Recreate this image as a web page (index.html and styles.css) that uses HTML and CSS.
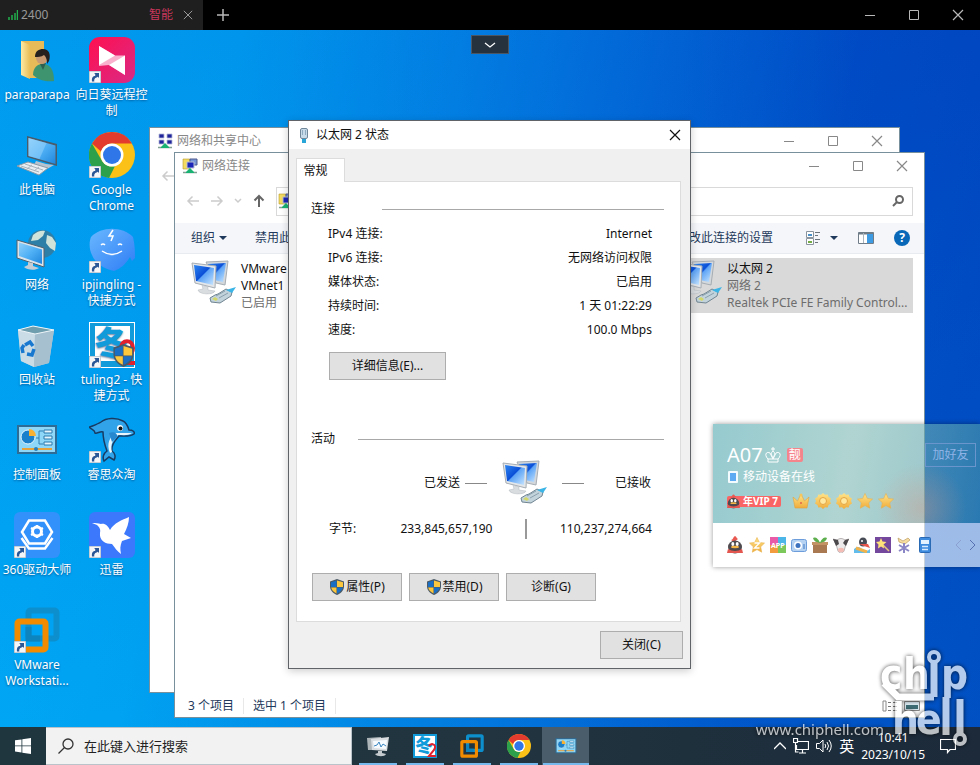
FILE: index.html
```html
<!DOCTYPE html>
<html lang="zh">
<head>
    <meta charset="UTF-8">
    <title>远程桌面</title>
    <link rel="stylesheet" href="styles.css">
</head>
<body>

<!-- 图标 -->
<svg class="sprite" aria-hidden="true">
    <defs>
        <linearGradient id="g-screen" x1="0" y1="0" x2="1" y2="1">
            <stop offset="0" stop-color="#2f86f0"/><stop offset=".45" stop-color="#0a4fd8"/><stop offset=".5" stop-color="#5ea4f6"/><stop offset="1" stop-color="#c9e6ff"/>
        </linearGradient>
        <linearGradient id="g-pc" x1="0" y1="0" x2="1" y2="1">
            <stop offset="0" stop-color="#8fd0fb"/><stop offset=".5" stop-color="#4fb0f5"/><stop offset="1" stop-color="#1f86dc"/>
        </linearGradient>
        <linearGradient id="g-folder" x1="0" y1="0" x2="1" y2="0">
            <stop offset="0" stop-color="#fdeaa5"/><stop offset="1" stop-color="#e9bd55"/>
        </linearGradient>
        <linearGradient id="g-sun" x1="0" y1="0" x2="1" y2="1">
            <stop offset="0" stop-color="#ff0f4f"/><stop offset="1" stop-color="#d92a86"/>
        </linearGradient>
        <linearGradient id="g-drop" x1="0" y1="0" x2="1" y2="1">
            <stop offset="0" stop-color="#69b8ff"/><stop offset="1" stop-color="#2f7cf5"/>
        </linearGradient>
        <linearGradient id="g-gold" x1="0" y1="0" x2="0" y2="1">
            <stop offset="0" stop-color="#ffe58a"/><stop offset="1" stop-color="#f0ac3c"/>
        </linearGradient>
    </defs>
    <symbol id="i-link" viewBox="0 0 12 12">
        <rect width="12" height="12" fill="#f4f6f8" stroke="#9aa7b3"/>
        <path d="M3 10.500c-.5-4 1-5.500 3.200-5.500V3L5 2h5v5L8.800 5.800 7.600 6.500C5.500 7 5 8.500 5.300 10.500z" fill="#2b5797"/>
    </symbol>
    <symbol id="i-user" viewBox="0 0 46 46">
        <path d="M7 4h23v37H13z" fill="#e7bb58"/><path d="M7 4l9 4v34l-9-4z" fill="url(#g-folder)"/>
        <path d="M19 38c0-8 5-11 10-11s11 3 11 17c-6 1-15 0-21-6z" fill="#3f9470"/>
        <path d="M26 27l3 6 3-7z" fill="#2c5f50"/>
        <circle cx="28" cy="21" r="6" fill="#c99b73"/>
        <path d="M21 20c0-6 4-8 8-8 6 0 8 5 6 12l-2 3c0-5-1-7-3-9-3 2-6 2-9 2z" fill="#26201e"/>
    </symbol>
    <symbol id="i-sunlogin" viewBox="0 0 46 46">
        <rect width="46" height="46" rx="11" fill="url(#g-sun)"/>
        <path d="M10 9l16 9.500h10V38L20 28l-10 1z" fill="#f9b0cc"/>
        <path d="M10 9l16 9.500L10 28z" fill="#fff"/><path d="M36 18.500V38L20 28z" fill="#fff"/>
    </symbol>
    <symbol id="i-pc" viewBox="0 0 46 46">
        <path d="M13 4l30 8v22l-30-9z" fill="#4a5b69"/><path d="M14.500 6l27 7.500v18.500l-27-8z" fill="url(#g-pc)"/><path d="M14.500 6l18 5-7 16-11-3z" fill="#9bd6fb" opacity=".5"/>
        <path d="M22 29l10 3 8 1-7 4-13-4z" fill="#b7c4cf"/>
        <path d="M3 34l11-4 20 6-9 7z" fill="#e8edf1" stroke="#8c9aa6"/><path d="M7 34l18 6M11 32l18 6M13 37l5-4M20 39l5-4" stroke="#a7b3bd" fill="none"/>
    </symbol>
    <symbol id="i-chrome" viewBox="0 0 46 46">
        <circle cx="23" cy="23" r="23" fill="#fbc116"/>
        <path d="M23 0A23 23 0 0 1 43 11.500H23a11.500 11.500 0 0 0-11 8L3 11.500A23 23 0 0 1 23 0z" fill="#e33b2e"/>
        <path d="M3 11.500L13 29a11.500 11.500 0 0 0 13 5l-6 12A23 23 0 0 1 3 11.500z" fill="#2da04c"/>
        <circle cx="23" cy="23" r="11.500" fill="#fff"/><circle cx="23" cy="23" r="9" fill="#2f77e8"/>
    </symbol>
    <symbol id="i-network" viewBox="0 0 46 46">
        <circle cx="28" cy="17" r="14" fill="#2e7fa8"/>
        <path d="M19 8c4-4 9-5 12-4l-2 5-5 4-7 1zM33 8l5 2 4 6-1 8-5-3-4-5z" fill="#cfe3da"/>
        <path d="M3 13l27 8v19L3 31z" fill="#dce4ea" stroke="#50606d"/><path d="M5 15.500l23 7v14.500L5 29z" fill="url(#g-pc)"/>
        <path d="M14 35l5 1v3l6 2c-4 3-12 2-15-1l4-2z" fill="#c3cdd5"/>
    </symbol>
    <symbol id="i-jingling" viewBox="0 0 46 46">
        <path d="M2 10C12-1 34-1 44 10c2 8 2 16 2 21l-3 3-2-4c-4 7-10 12-16 14C15 42 6 36 3 28 0 22 0 15 2 10z" fill="url(#g-drop)"/>
        <path d="M12 18q2-2 4 0M29 18q2-2 4 0M13 24q10 7 20 0" fill="none" stroke="#fff" stroke-width="1.500"/>
        <path d="M24 3l-4 6h4l-2 5" fill="none" stroke="#fff" stroke-width="1.500"/>
    </symbol>
    <symbol id="i-bin" viewBox="0 0 46 46">
        <path d="M4 8l15-4 21 4-5 33-15 4-13-6z" fill="#b3cfdd"/><path d="M4 8l17 4-1 33-13-6z" fill="#cadce6"/><path d="M21 12l19-4-5 33-15 4z" fill="#a7c0cf"/>
        <path d="M4 8l15-4 21 4-19 4z" fill="#6f9eae" stroke="#eff6f9"/>
        <path d="M11 23l5-3 3 4M20 27l-2 6-5-1M9 31l-1-5 2-3" fill="none" stroke="#1878d0" stroke-width="3.500"/>
    </symbol>
    <symbol id="i-shield" viewBox="0 0 16 16">
        <path d="M8 0l7 2.500v5C15 11.500 11 15 8 16 5 15 1 11.500 1 7.500v-5z" fill="#4b5a66"/>
        <path d="M7.500 1.400V8H2V3.300z" fill="#1a6fc4"/><path d="M8 1.400V8h6V3.300z" fill="#fcc63d"/><path d="M2.200 8.500H7.500v6C4.800 13.200 2.500 11 2.200 8.500z" fill="#fcc63d"/><path d="M13.800 8.500H8v6c2.800-1.200 5.500-3.500 5.800-6z" fill="#1a6fc4"/>
    </symbol>
    <symbol id="i-tuling" viewBox="0 0 46 46">
        <rect width="46" height="46" fill="#fff"/><path d="M1 1h44v44H1zM6 4v35h35V4z" fill="#129bdb" fill-rule="evenodd"/>
        <text x="5" y="34" font-size="34" font-weight="900" fill="#129bdb">冬</text>
        <path d="M32 26c0-9 12-9 12 0s-9 12-10 15h12" fill="none" stroke="#e1212d" stroke-width="4"/>
        <use href="#i-shield" x="23" y="22" width="23" height="23"/>
    </symbol>
    <symbol id="i-panel" viewBox="0 0 46 46">
        <rect x="3" y="8" width="40" height="29" fill="#2e6c96"/><rect x="5" y="10" width="36" height="25" fill="#8fd7f8"/>
        <circle cx="14" cy="20" r="7" fill="#1b80cb" stroke="#e5f5fd"/><path d="M15 19v-7a7 7 0 0 1 7 7z" fill="#f8b133"/>
        <path d="M22 21h3v-7h4M25 21v6h4" fill="none" stroke="#2f7fb4"/>
        <path d="M30 13h8v3h-8zM30 19h8v3h-8zM30 25h8v3h-8z" fill="#e5f5fd" stroke="#2779ad"/><path d="M8 32h30" stroke="#e7a23a" stroke-width="2"/><circle cx="22" cy="32" r="2" fill="#2a7fb8"/>
    </symbol>
    <symbol id="i-dolphin" viewBox="0 0 46 46">
        <path d="M1 10C6 8 9 7 12 5c5-4 15-5 22-1 4 2 5 6 6 9 4 0 6 2 5 4-4 3-10 2-15 2-4 5-8 9-7 15 3 2 4 6 2 9l-5-3-5 4c-2-4 0-8 3-10-3-8-4-12-4-19-3-1-6 2-8 1 0-3-3-3-6-6z" fill="#31a3e8" stroke="#173b62" stroke-width="1.500"/>
        <path d="M21 36c-4-9 0-17 6-20l16 0c-4 3-9 2-14 2-5 5-8 9-6 17z" fill="#eaf6fd"/>
        <circle cx="31" cy="11" r="3" fill="#fff"/><circle cx="31.500" cy="11.500" r="2" fill="#111"/>
        <path d="M20 16c4-2 9 0 8 4l-5 5z" fill="#2788cf"/>
    </symbol>
    <symbol id="i-driver" viewBox="0 0 46 46">
        <rect width="46" height="46" rx="6" fill="#3391fb"/>
        <path d="M15 8.500h16L38 20 31 31.500H15L8 20z" fill="none" stroke="#fff" stroke-width="2.500"/>
        <path d="M7.500 26L15 36.500h16L38.500 26" fill="none" stroke="#fff" stroke-width="2.500"/>
        <circle cx="23" cy="19.500" r="4.500" fill="none" stroke="#fff" stroke-width="3"/><path d="M23 13v2M23 24v2M17 16l2 1M27 22l2 1M17 23l2-1M27 17l2-1" stroke="#fff" stroke-width="2.500"/>
    </symbol>
    <symbol id="i-xunlei" viewBox="0 0 46 46">
        <rect width="46" height="46" rx="6" fill="#3c78fb"/>
        <path d="M3 11c4 0 6 0 9 1 4-1 7 2 9 6C25 11 33 8 40 5c0 6-2 11-5 17l7 4-9 3c-2 5-2 8-1 13-4-3-6-6-9-10-6 0-13-3-12-11 1-4-1-6-3-8z" fill="#fff"/>
    </symbol>
    <symbol id="i-vmware" viewBox="0 0 46 46">
        <rect x="14.500" y="3.500" width="28" height="28" rx="2" fill="none" stroke="#0d8fce" stroke-width="6"/>
        <rect x="3.500" y="14.500" width="28" height="28" rx="2" fill="none" stroke="#f38b00" stroke-width="6"/>
        <path d="M14.500 20v11.500H26" fill="none" stroke="#0d84bd" stroke-width="6"/>
    </symbol>
    <symbol id="i-adapter" viewBox="0 0 46 46">
        <path d="M15 2l22-1-3 24-9-2z" fill="#d3d8dc" stroke="#a6adb3"/><path d="M17 4l18-1-3 19-14-3z" fill="url(#g-screen)"/>
        <path d="M1 3l24 3-1 22-20-5z" fill="#e4e7ea" stroke="#a6adb3"/><path d="M3 5l20 3-1 17-17-4z" fill="url(#g-screen)"/>
        <path d="M11 25l6 2v3l7 1c-1 4-16 4-17-1l5-1z" fill="#d9dde0" stroke="#b3b9be" stroke-width=".5"/>
        <path d="M19 38l5-3 3-1 8-5 6 3-1 4-11 7-9-1z" fill="#c3d3dc" stroke="#708591"/><path d="M25 36l9-5M28 38l9-5" stroke="#8aa0ad"/><path d="M35 30l10-3-4 6z" fill="#3bb4e6"/><path d="M21 39l3-2 3 2-2 2z" fill="#d3d86a"/>
    </symbol>
    <symbol id="i-share" viewBox="0 0 16 16">
        <path d="M2 1h5v4H2zM10 1h5v4h-5zM2 7h5v4H2zM10 7h5v4h-5z" fill="#20249b" stroke="#b4b9d8" stroke-width=".8"/>
        <path d="M1 14.500h14" stroke="#83a095" stroke-width="1.500"/><path d="M8 10l4 4v1H4v-1z" fill="#18b273"/>
    </symbol>
    <symbol id="i-conn" viewBox="0 0 16 16">
        <path d="M1 1h7v10H1z" fill="#f3db62" stroke="#b79a2a" stroke-width=".6"/>
        <path d="M8 1h7v6H8z" fill="#7796d9" stroke="#4f5a8c"/><path d="M5 4h7v6H5z" fill="#1b25b7" stroke="#b9bfd5"/>
        <path d="M1 14.500h14" stroke="#83a095" stroke-width="1.500"/><path d="M8 10l4 4v1H4v-1z" fill="#18b273"/>
    </symbol>
    <symbol id="i-plug" viewBox="0 0 16 16">
        <rect x="4.500" y="1.500" width="7" height="10" rx="1.500" fill="#c8dbe8" stroke="#70879a"/><path d="M6.500 3v5M9.500 3v5" stroke="#8fabc0"/><path d="M6 12h4v4H6z" fill="#29a6d8"/>
    </symbol>
    <symbol id="i-min" viewBox="0 0 12 12"><path d="M1 6.500h10" stroke="currentColor" fill="none"/></symbol>
    <symbol id="i-max" viewBox="0 0 12 12"><path d="M1.500 1.500h9v9h-9z" stroke="currentColor" fill="none"/></symbol>
    <symbol id="i-close" viewBox="0 0 12 12"><path d="M1 1l10 10M11 1L1 11" stroke="currentColor" fill="none" stroke-width="1.200"/></symbol>
    <symbol id="i-arrow" viewBox="0 0 14 14"><path d="M13 7H2M6.500 2.500L2 7l4.500 4.500" stroke="currentColor" fill="none" stroke-width="1.500"/></symbol>
    <symbol id="i-search" viewBox="0 0 16 16"><circle cx="10" cy="6" r="5" fill="none" stroke="currentColor" stroke-width="1.300"/><path d="M6.500 9.500L.5 15.500" stroke="currentColor" stroke-width="1.300"/></symbol>
    <symbol id="i-star" viewBox="0 0 16 16"><path d="M8 .5l2.300 4.900 5.200.7-3.800 3.700 1 5.400L8 12.600l-4.700 2.600 1-5.400L.5 6.100l5.200-.7z" fill="url(#g-gold)" stroke="#eab14e" stroke-width=".6"/></symbol>
    <symbol id="i-sun" viewBox="0 0 16 16"><path d="M8 0l2 1.800L12.700 1.500l.8 2.600L16 5.500 15 8l1 2.500-2.500 1.400-.8 2.600-2.700-.3L8 16l-2-1.800-2.700.3-.8-2.600L0 10.500 1 8 0 5.500l2.500-1.400.8-2.600 2.700.3z" fill="url(#g-gold)"/><circle cx="8" cy="8" r="3.500" fill="#ffe9a0" stroke="#e5a544"/></symbol>
    <symbol id="i-crown" viewBox="0 0 18 16"><path d="M1 4l4.500 4L9 1l3.500 7L17 4l-2 11H3z" fill="url(#g-gold)" stroke="#e0a23c" stroke-width=".6"/><circle cx="9" cy="2" r="1.500" fill="#f6c65a"/><circle cx="9" cy="10" r="1" fill="#e3654a"/></symbol>
    <symbol id="i-penguin" viewBox="0 0 16 18">
        <path d="M8 0c2 1 1 2 3 3l-4 3-3-2c2 0 2-3 4-4z" fill="#e95851"/>
        <ellipse cx="8" cy="11" rx="7" ry="6.500" fill="#4e4a4e"/><ellipse cx="5.800" cy="8" rx="1.500" ry="2" fill="#fff"/><ellipse cx="10.200" cy="8" rx="1.500" ry="2" fill="#fff"/><ellipse cx="8" cy="11" rx="4" ry="1.200" fill="#f2b546"/><path d="M1 13q7 4 14 0l1 4H0z" fill="#e2564f"/>
    </symbol>
</svg>

<header class="session-bar">
    <div class="session-tab">
        <svg class="signal" viewBox="0 0 10 10"><path d="M1 10V7M4 10V5M7 10V3M9.500 10V0" stroke="#22b14c" stroke-width="1.500"/></svg>
        <span class="session-name">2400</span>
        <span class="session-mode">智能</span>
        <button class="plain" aria-label="关闭标签"><svg class="s10"><use href="#i-close"/></svg></button>
    </div>
    <button class="plain add-tab" aria-label="新建标签"><svg class="s12" viewBox="0 0 12 12"><path d="M6 0v12M0 6h12" stroke="currentColor" stroke-width="1.500"/></svg></button>
    <div class="session-controls">
        <button class="plain" aria-label="最小化"><svg class="s12"><use href="#i-min"/></svg></button>
        <button class="plain" aria-label="最大化"><svg class="s12"><use href="#i-max"/></svg></button>
        <button class="plain" aria-label="关闭"><svg class="s12"><use href="#i-close"/></svg></button>
    </div>
</header>

<main class="desktop">
    <div class="shortcuts">
        <a href="#" class="shortcut"><svg><use href="#i-user"/></svg><span>paraparapa</span></a>
        <a href="#" class="shortcut"><svg><use href="#i-sunlogin"/><use href="#i-link" y="34" width="12" height="12"/></svg><span>向日葵远程控制</span></a>
        <a href="#" class="shortcut"><svg><use href="#i-pc"/></svg><span>此电脑</span></a>
        <a href="#" class="shortcut"><svg><use href="#i-chrome"/><use href="#i-link" y="34" width="12" height="12"/></svg><span>Google Chrome</span></a>
        <a href="#" class="shortcut"><svg><use href="#i-network"/></svg><span>网络</span></a>
        <a href="#" class="shortcut"><svg><use href="#i-jingling"/><use href="#i-link" y="34" width="12" height="12"/></svg><span>ipjingling - 快捷方式</span></a>
        <a href="#" class="shortcut"><svg><use href="#i-bin"/></svg><span>回收站</span></a>
        <a href="#" class="shortcut"><svg><use href="#i-tuling"/><use href="#i-link" y="34" width="12" height="12"/></svg><span>tuling2 - 快捷方式</span></a>
        <a href="#" class="shortcut"><svg><use href="#i-panel"/></svg><span>控制面板</span></a>
        <a href="#" class="shortcut"><svg><use href="#i-dolphin"/><use href="#i-link" y="34" width="12" height="12"/></svg><span>睿思众淘</span></a>
        <a href="#" class="shortcut"><svg><use href="#i-driver"/><use href="#i-link" y="34" width="12" height="12"/></svg><span>360驱动大师</span></a>
        <a href="#" class="shortcut"><svg><use href="#i-xunlei"/><use href="#i-link" y="34" width="12" height="12"/></svg><span>迅雷</span></a>
        <a href="#" class="shortcut"><svg><use href="#i-vmware"/><use href="#i-link" y="34" width="12" height="12"/></svg><span>VMware Workstati...</span></a>
    </div>

    <button class="plain pulldown" aria-label="展开工具栏"><svg class="s12" viewBox="0 0 12 12"><path d="M1 4l5 4 5-4" fill="none" stroke="currentColor" stroke-width="1.300"/></svg></button>

    <!-- 网络和共享中心 -->
    <section class="window sharing">
        <div class="titlebar">
            <svg class="s16"><use href="#i-share"/></svg>
            <span class="title">网络和共享中心</span>
            <button class="plain" aria-label="最小化"><svg class="s12"><use href="#i-min"/></svg></button>
            <button class="plain" aria-label="最大化"><svg class="s12"><use href="#i-max"/></svg></button>
            <button class="plain" aria-label="关闭"><svg class="s12"><use href="#i-close"/></svg></button>
        </div>
        <div class="navbar"><svg class="s14 faint"><use href="#i-arrow"/></svg></div>
    </section>

    <!-- 网络连接 -->
    <section class="window connections">
        <div class="titlebar">
            <svg class="s16"><use href="#i-conn"/></svg>
            <span class="title">网络连接</span>
            <button class="plain" aria-label="最小化"><svg class="s12"><use href="#i-min"/></svg></button>
            <button class="plain" aria-label="最大化"><svg class="s12"><use href="#i-max"/></svg></button>
            <button class="plain" aria-label="关闭"><svg class="s12"><use href="#i-close"/></svg></button>
        </div>
        <div class="navbar">
            <svg class="s14 faint"><use href="#i-arrow"/></svg>
            <svg class="s14 faint flip"><use href="#i-arrow"/></svg>
            <svg class="s8 faint" viewBox="0 0 8 8"><path d="M1 2l3 3 3-3" fill="none" stroke="currentColor" stroke-width="1.500"/></svg>
            <svg class="s14 up" viewBox="0 0 14 14"><path d="M7 13V2M2.500 6.500L7 2l4.500 4.500" fill="none" stroke="currentColor" stroke-width="2"/></svg>
            <div class="address">
                <svg class="s16"><use href="#i-conn"/></svg>
                <svg class="s12" viewBox="0 0 12 12"><circle cx="7.500" cy="4.500" r="3.500" fill="none" stroke="currentColor" stroke-width="2"/><path d="M5 7L1 11" stroke="currentColor" stroke-width="2"/></svg>
            </div>
        </div>
        <div class="commands">
            <button class="plain organize">组织 <span class="caret"></span></button>
            <button class="plain">禁用此网络设备</button>
            <button class="plain push">更改此连接的设置</button>
            <button class="plain view" aria-label="视图"><svg class="s16" viewBox="0 0 16 16"><path d="M1.500 1.500h7v6h-7zM1.500 8.500h7v6h-7z" fill="#fff" stroke="#8b949d"/><path d="M3 4h4v2H3z" fill="#4b90c9"/><path d="M3 11h4v2H3z" fill="#75ab45"/><path d="M10 2.500h5M10 5.500h3M10 9.500h5M10 12.500h3" stroke="#6c747c"/></svg><span class="caret"></span></button>
            <button class="plain" aria-label="预览窗格"><svg class="s16" viewBox="0 0 16 16"><path d="M.5 2.500h15v11H.5z" fill="#fff" stroke="#6f7c88"/><path d="M.5 3.500h15" stroke="#6f7c88" stroke-width="2"/><path d="M5.500 3v10" stroke="#a9b4be"/><path d="M9 4h6v9H9z" fill="#3d9be4"/></svg></button>
            <button class="plain help" aria-label="帮助">?</button>
        </div>
        <div class="adapters">
            <div class="adapter">
                <svg><use href="#i-adapter"/></svg>
                <p>VMware<br>VMnet1<br><span>已启用</span></p>
            </div>
            <div class="adapter"></div>
            <div class="adapter selected">
                <svg><use href="#i-adapter"/></svg>
                <p>以太网 2<br><span>网络 2</span><br><span>Realtek PCIe FE Family Control...</span></p>
            </div>
        </div>
        <footer class="statusbar">
            <span>3 个项目</span><span>选中 1 个项目</span>
            <svg class="views" viewBox="0 0 42 12"><path d="M1 1h3v10H1z" fill="#fff" stroke="#888"/><path d="M6 2.500h3M11 2.500h4M6 6.500h3M11 6.500h4M6 10.500h3M11 10.500h4" stroke="#777"/><path d="M22.500 1.500h15v9h-15z" fill="#d8e6ee" stroke="#888"/><path d="M24 5h12v4H24z" fill="#3e6c74"/></svg>
        </footer>
    </section>

    <!-- 以太网 2 状态 -->
    <section class="dialog">
        <div class="titlebar">
            <svg class="s16"><use href="#i-plug"/></svg>
            <span class="title">以太网 2 状态</span>
            <button class="plain" aria-label="关闭"><svg class="s12"><use href="#i-close"/></svg></button>
        </div>
        <div class="dialog-body">
            <button class="plain tab">常规</button>
            <div class="panel">
                <h2 class="group wide">连接</h2>
                <dl class="facts">
                    <div><dt>IPv4 连接:</dt><dd>Internet</dd></div>
                    <div><dt>IPv6 连接:</dt><dd>无网络访问权限</dd></div>
                    <div><dt>媒体状态:</dt><dd>已启用</dd></div>
                    <div><dt>持续时间:</dt><dd>1 天 01:22:29</dd></div>
                    <div><dt>速度:</dt><dd>100.0 Mbps</dd></div>
                </dl>
                <button class="btn details">详细信息(E)...</button>
                <h2 class="group activity">活动</h2>
                <div class="traffic">
                    <span class="sent">已发送</span>
                    <svg><use href="#i-adapter"/></svg>
                    <span class="received">已接收</span>
                </div>
                <div class="bytes">
                    <span>字节:</span><span class="num">233,845,657,190</span><i></i><span class="num">110,237,274,664</span>
                </div>
                <div class="actions">
                    <button class="btn"><svg class="s16"><use href="#i-shield"/></svg>属性(P)</button>
                    <button class="btn"><svg class="s16"><use href="#i-shield"/></svg>禁用(D)</button>
                    <button class="btn">诊断(G)</button>
                </div>
            </div>
            <button class="btn close-btn">关闭(C)</button>
        </div>
    </section>

    <!-- QQ 资料卡 -->
    <aside class="card">
        <div class="card-head">
            <div class="card-info">
                <div class="nick">A07<svg class="s16" viewBox="0 0 16 16"><path d="M8 0v4M6 2h4M3 12C-1 8 1 4 5 6l3 6 3-6c4-2 6 2 2 6zM3 12v3h10v-3M8 4c-3 2-1 5 0 7 1-2 3-5 0-7" fill="none" stroke="#fff"/></svg><b>靓</b></div>
                <div class="online"><svg class="s12" viewBox="0 0 12 12"><rect x="1" width="10" height="12" rx="1" fill="#f4fbff"/><path d="M3 2h6v8H3z" fill="#5daaf2"/></svg>移动设备在线</div>
                <div class="levels">
                    <span class="vip"><svg viewBox="0 0 16 18"><use href="#i-penguin"/></svg>年VIP 7</span>
                    <svg class="s18"><use href="#i-crown"/></svg>
                    <svg class="s16"><use href="#i-sun"/></svg>
                    <svg class="s16"><use href="#i-sun"/></svg>
                    <svg class="s16"><use href="#i-star"/></svg>
                    <svg class="s16"><use href="#i-star"/></svg>
                </div>
            </div>
            <button class="plain add-friend">加好友</button>
        </div>
        <div class="card-icons">
            <svg class="s18"><use href="#i-penguin"/></svg>
            <svg class="s16" viewBox="0 0 16 16"><use href="#i-star"/><path d="M5.500 6h5l-5 5h5" fill="none" stroke="#fff" stroke-width="1.300"/></svg>
            <svg class="s16" viewBox="0 0 16 16"><path d="M0 0h8v8H0z" fill="#e95aa7"/><path d="M8 0h8v8H8z" fill="#4cb6e8"/><path d="M0 8h8v8H0z" fill="#f29a3e"/><path d="M8 8h8v8H8z" fill="#7cc85a"/><text x="1" y="11" font-size="7" font-weight="700" fill="#fff">APP</text></svg>
            <svg class="s16" viewBox="0 0 16 16"><rect x=".5" y="2.500" width="15" height="12" rx="2" fill="#b5d2f3" stroke="#6d9edb"/><circle cx="7" cy="8.500" r="4" fill="#fff"/><circle cx="7" cy="8.500" r="2.500" fill="#3d72bf"/><path d="M12 7h2v5h-2z" fill="#7aa5db"/></svg>
            <svg class="s16" viewBox="0 0 16 16"><path d="M1 6h14v10H1z" fill="#a97a52"/><path d="M0 5h16v3H0z" fill="#c39265"/><path d="M8 6C6 0 2 0 1 1c1 4 4 4 7 5 3-1 6-1 7-5-1-1-5-1-7 5z" fill="#5daf4d"/></svg>
            <svg class="s16" viewBox="0 0 16 16"><path d="M0 2l4 1c3-2 5-2 8 0l4-1-3 5-2 7c-2 3-4 3-6 0L3 7z" fill="#eceaea" stroke="#8d8586" stroke-width=".6"/><path d="M0 2l5 1 1 4-3 2zM16 2l-4 1-2 3 3 3z" fill="#4c494c"/><ellipse cx="8" cy="13" rx="3" ry="2.200" fill="#f3bcb4"/></svg>
            <svg class="s16" viewBox="0 0 16 16"><ellipse cx="9" cy="5" rx="4" ry="4.500" fill="#474b55"/><path d="M5 7h9l2 4-6-2z" fill="#e8574b"/><path d="M0 12q4-4 8 0t8 0v4H0z" fill="#62bdec"/><path d="M2 11l11 4" stroke="#f0b24a" stroke-width="3"/><circle cx="8" cy="4" r="1" fill="#fff"/></svg>
            <svg class="s16" viewBox="0 0 16 16"><rect width="16" height="16" fill="#74489c"/><path d="M8 8l6 6" stroke="#e4c67d" stroke-width="1.500"/><path d="M6 1l1.500 3.500 4 .5-3 2.500.5 4L6 9.500l-3 2 .5-4L1 5l3.500-.5z" fill="#ffe27a"/></svg>
            <svg class="s16" viewBox="0 0 16 16"><path d="M2 1l5 3 5-3 2 2-5 4-6-2z" fill="#f7dda0" stroke="#bd9c61" stroke-width=".7"/><path d="M8 6v10M3 8l10 6M13 8L3 14" stroke="#8b87c6" stroke-width="2"/></svg>
            <svg class="s16" viewBox="0 0 16 16"><rect x="2.500" y=".5" width="11" height="15" rx="1" fill="#3c8bdf" stroke="#2a69b4"/><path d="M4 3h8v4H4z" fill="#e3f2ff"/><path d="M5 9.500h6M5 12.500h6" stroke="#d5eaff" stroke-width="1.500"/></svg>
            <svg class="pager" viewBox="0 0 22 12"><path d="M7 1L2 6l5 5" fill="none" stroke="#8ba0d0"/><path d="M16 1l5 5-5 5" fill="none" stroke="#5670b0"/></svg>
        </div>
    </aside>
</main>

<footer class="taskbar">
    <button class="plain start" aria-label="开始"><svg class="s16" viewBox="0 0 16 16"><path d="M0 2.300l6.500-.9v6.100H0zM7.300 1.300L16 0v7.500H7.300zM0 8.300h6.500v6.200L0 13.600zM7.300 8.300H16V16l-8.700-1.300z" fill="#fff"/></svg></button>
    <label class="search"><svg class="s16"><use href="#i-search"/></svg><input type="text" placeholder="在此键入进行搜索" aria-label="搜索"></label>
    <nav class="tasks">
        <button class="plain task" aria-label="任务管理器"><svg class="s24" viewBox="0 0 24 24"><path d="M1 4l14-1v13H2z" fill="#aeb5b9"/><path d="M5 5l18-2-2 14-15-1z" fill="#dadee0"/><path d="M7 7l14-1-1 9-12-1z" fill="#f8fbfd"/><path d="M8 12l3-1 2-3 2 5 2-3 3 2" fill="none" stroke="#3a86c0"/><path d="M12 17h4v2l4 1c-1 3-9 3-11 0l3-1z" fill="#c6cbcf"/></svg></button>
        <button class="plain task" aria-label="tuling2"><svg class="s24" viewBox="0 0 24 24"><path d="M0 0h24v24H0z" fill="#129bdb"/><path d="M2 2h20v20H2z" fill="#fff"/><text x="2" y="18" font-size="18" font-weight="900" fill="#129bdb">冬</text><path d="M16 12q1-2 3-2 5 1 2 6l-5 6h7" fill="none" stroke="#e1212d" stroke-width="2"/></svg></button>
        <button class="plain task" aria-label="VMware"><svg class="s24"><use href="#i-vmware"/></svg></button>
        <button class="plain task" aria-label="Chrome"><svg class="s24"><use href="#i-chrome"/></svg></button>
        <button class="plain task active" aria-label="控制面板"><svg class="s24"><use href="#i-panel"/></svg></button>
    </nav>
    <div class="tray">
        <svg class="s12" viewBox="0 0 12 12"><path d="M0 9l6-6 6 6" fill="none" stroke="#fff" stroke-width="1.300"/></svg>
        <svg class="s16" viewBox="0 0 16 16"><path d="M5 3.500h10.500v8H3.500V7M9.500 12v3M6 15h7M.5.500h4v4h-4zM2.500 5v9h3" fill="none" stroke="#fff" stroke-width="1.200"/></svg>
        <svg class="s16" viewBox="0 0 16 16"><path d="M.5 5.500h3L7 2v12l-3.500-3.500h-3zM9 6q1.500 2 0 4M11 4q3 4 0 8M13 2q4.500 6 0 12" fill="none" stroke="#fff"/></svg>
        <span class="ime">英</span>
        <time>10:41<br>2023/10/15</time>
        <svg class="s16 notify" viewBox="0 0 16 16"><path d="M.5 1.500h15v10H10l-2.500 3v-3h-7z" fill="none" stroke="#fff" stroke-width="1.200"/></svg>
    </div>
</footer>

<div class="watermark">
    <span>www.chiphell.com</span>
    <svg viewBox="0 0 88 104">
        <g class="mark-text">
            <text x="0" y="42">c</text><text x="23" y="42">h</text><text x="61" y="42">p</text>
            <text x="12" y="87">h</text><text x="36" y="87">e</text>
        </g>
        <g fill="none" stroke="#fff" stroke-width="7">
            <circle cx="54" cy="10" r="5" stroke-width="4"/><path d="M54 15v35M4 36l14 14h36M66 50v38M80 52v35"/><circle cx="80" cy="92" r="5" stroke-width="4"/>
        </g>
    </svg>
</div>

</body>
</html>
```
FILE: styles.css
```css
* {
    box-sizing: border-box;
}
body {
    margin: 0;
    height: 100vh;
    display: flex;
    flex-direction: column;
    position: relative;
    overflow: hidden;
    font-family: "Noto Sans", "Noto Sans CJK SC", sans-serif;
    font-size: 12px;
    line-height: 16px;
    color: #111;
}
h2, p, dl, dd {
    margin: 0;
    font-size: 12px;
    font-weight: 400;
}
svg {
    flex: none;
    display: block;
}
.sprite {
    position: absolute;
    width: 0;
    height: 0;
}
.s8 { width: 8px; height: 8px; }
.s10 { width: 10px; height: 10px; }
.s12 { width: 12px; height: 12px; }
.s14 { width: 14px; height: 14px; }
.s16 { width: 16px; height: 16px; }
.s18 { width: 18px; height: 18px; }
.s24 { width: 24px; height: 24px; }
.plain {
    display: flex;
    align-items: center;
    justify-content: center;
    padding: 0;
    border: 0;
    background: none;
    color: inherit;
    font: inherit;
    white-space: nowrap;
}

/* 顶部会话栏 */
.session-bar {
    flex: none;
    display: flex;
    height: 30px;
    background: #000;
    color: #b8b8b8;
}
.session-tab {
    display: flex;
    align-items: center;
    width: 203px;
    padding: 0 10px 0 8px;
    background: #1f1f1f;
    color: #999;
}
.signal {
    width: 10px;
    height: 10px;
    margin-right: 3px;
}
.session-mode {
    margin: 0 10px 0 auto;
    color: #c9375d;
}
.add-tab {
    width: 40px;
}
.session-controls {
    display: flex;
    margin-left: auto;
}
.session-controls button {
    width: 44px;
}

/* 桌面 */
.desktop {
    flex: 1;
    position: relative;
    overflow: hidden;
    background: linear-gradient(to bottom, rgba(0, 60, 200, 0.1), rgba(0, 190, 255, 0.1)), linear-gradient(100deg, #00a6f4, #009ff0 22%, #0284e4 42%, #0268d6 60%, #004cc4 78%, #0044bc);
}
.shortcuts {
    display: grid;
    grid-template-columns: 74px 75px;
    grid-auto-rows: 95px;
    padding-top: 7px;
}
.shortcut {
    display: flex;
    flex-direction: column;
    align-items: center;
    gap: 4px;
    color: #fff;
    text-align: center;
    text-decoration: none;
    text-shadow: 0 1px 2px rgba(0, 40, 90, 0.6);
}
.shortcut svg {
    width: 46px;
    height: 46px;
}
.shortcut span {
    max-width: 72px;
}
.pulldown {
    position: absolute;
    top: 5px;
    left: calc(50% - 19px);
    width: 38px;
    height: 19px;
    background: #26323e;
    border: 1px solid #4a5664;
    color: #fff;
}

/* 窗口 */
.window {
    position: absolute;
    display: flex;
    flex-direction: column;
    width: 751px;
    height: 566px;
    background: #fff;
    border: 1px solid #78909c;
    color: #888;
}
.sharing {
    left: 149px;
    top: 97px;
}
.connections {
    left: 174px;
    top: 122px;
}
.titlebar {
    display: flex;
    align-items: center;
    height: 26px;
    padding-left: 7px;
}
.title {
    margin: 0 auto 0 4px;
}
.titlebar button {
    width: 44px;
    height: 26px;
}
.navbar {
    display: flex;
    align-items: center;
    gap: 10px;
    height: 44px;
    padding: 0 11px;
    color: #666;
}
.faint {
    color: #ccc;
}
.flip {
    transform: scaleX(-1);
}
.address {
    flex: 1;
    display: flex;
    align-items: center;
    justify-content: space-between;
    height: 29px;
    padding: 0 8px 0 1px;
    border: 1px solid #d9d9d9;
}
.commands {
    display: flex;
    align-items: center;
    gap: 20px;
    height: 31px;
    padding: 0 14px 0 16px;
    background: #f4f6f9;
    border-bottom: 1px solid #e8ebef;
    color: #1e395b;
}
.commands button {
    gap: 4px;
}
.commands .organize {
    margin-right: 8px;
}
.commands .view {
    gap: 9px;
}
.commands .push {
    margin: 0 12px 0 auto;
}
.caret {
    border: 4px solid transparent;
    border-top-color: #1e395b;
    border-bottom: 0;
}
.commands .help {
    width: 16px;
    height: 16px;
    border-radius: 50%;
    background: #0a68b8;
    color: #fff;
    font-weight: 700;
}
.adapters {
    display: grid;
    grid-template-columns: repeat(3, 1fr);
    gap: 3px;
    padding: 4px 11px 0 12px;
}
.adapter {
    display: flex;
    gap: 4px;
    height: 55px;
    padding: 2px 4px;
    color: #111;
    white-space: nowrap;
}
.adapter svg {
    width: 46px;
    height: 46px;
}
.adapter p {
    line-height: 17px;
}
.adapter p span {
    color: #6d6d6d;
}
.adapter.selected {
    background: #d9d9d9;
}
.statusbar {
    display: flex;
    align-items: center;
    height: 22px;
    margin-top: auto;
    padding-left: 13px;
    color: #1e395b;
}
.statusbar span {
    padding-right: 9px;
    margin-right: 9px;
    border-right: 1px solid #e8e8e8;
}
.views {
    width: 42px;
    height: 12px;
    margin-left: auto;
}

/* 状态对话框 */
.dialog {
    position: absolute;
    left: 288px;
    top: 90px;
    width: 403px;
    border: 1px solid #606468;
    background: #f0f0f0;
    box-shadow: 0 2px 8px rgba(0, 0, 0, 0.2);
}
.dialog .titlebar {
    height: 28px;
    background: #fff;
}
.dialog .titlebar button {
    width: 30px;
}
.dialog-body {
    display: flex;
    flex-direction: column;
    padding: 9px 7px;
}
.tab {
    align-self: flex-start;
    width: 49px;
    height: 24px;
    padding-right: 10px;
    margin-bottom: -1px;
    background: #fff;
    border: 1px solid #dcdcdc;
    border-bottom: 0;
    z-index: 1;
}
.panel {
    padding: 16px 16px 20px 14px;
    margin-right: 2px;
    background: #fff;
    border: 1px solid #dcdcdc;
}
.group {
    display: flex;
    align-items: center;
    line-height: 22px;
}
.group::after {
    content: "";
    flex: 1;
    height: 1px;
    margin-left: 23px;
    background: #a8a8a8;
}
.group.wide::after {
    margin-left: 47px;
}
.facts {
    padding: 2px 12px 0 17px;
}
.facts div {
    display: flex;
    justify-content: space-between;
    line-height: 24px;
}
.btn {
    display: flex;
    align-items: center;
    justify-content: center;
    gap: 1px;
    width: 90px;
    height: 28px;
    padding: 0;
    border: 1px solid #adadad;
    background: #e1e1e1;
    color: #111;
    font: inherit;
}
.details {
    width: 117px;
    margin: 10px 0 48px 18px;
}
.traffic {
    display: flex;
    align-items: center;
    justify-content: space-between;
    padding: 0 13px 0 113px;
    margin: 10px 0 12px;
}
.traffic svg {
    width: 46px;
    height: 46px;
}
.traffic span {
    display: flex;
    align-items: center;
}
.sent::after, .received::before {
    content: "";
    width: 22px;
    height: 1px;
    background: #888;
}
.sent::after {
    margin-left: 5px;
}
.received::before {
    margin-right: 31px;
}
.bytes {
    display: grid;
    grid-template-columns: 70px 1fr 66px 1fr;
    align-items: center;
    height: 22px;
    padding: 0 12px 0 18px;
}
.bytes .num {
    text-align: right;
}
.bytes i {
    justify-self: center;
    width: 2px;
    height: 20px;
    background: #999;
}
.actions {
    display: flex;
    gap: 7px;
    margin: 33px 0 0 1px;
}
.close-btn {
    align-self: flex-end;
    width: 83px;
    margin-top: 9px;
}

/* QQ 资料卡 */
.card {
    position: absolute;
    right: 0;
    top: 394px;
    width: 267px;
    color: #fff;
    box-shadow: 0 0 5px rgba(0, 0, 0, 0.4);
}
.card-head {
    display: flex;
    justify-content: space-between;
    height: 99px;
    padding: 19px 4px 0 14px;
    background: radial-gradient(circle at 78% 85%, rgba(220, 150, 130, 0.35), transparent 20%), linear-gradient(100deg, rgba(95, 175, 182, 0.66), rgba(135, 190, 185, 0.66) 50%, rgba(70, 150, 165, 0.6));
}
.nick {
    display: flex;
    align-items: center;
    gap: 2px;
    height: 24px;
    font-size: 20px;
}
.nick b {
    margin-left: 4px;
    padding: 0 2px;
    border-radius: 2px;
    background: #f5858d;
    font-size: 12px;
    font-weight: 400;
    line-height: 14px;
}
.online {
    display: flex;
    align-items: center;
    gap: 4px;
    height: 20px;
}
.levels {
    display: flex;
    align-items: center;
    gap: 5px;
    height: 28px;
}
.vip {
    display: flex;
    align-items: center;
    gap: 3px;
    height: 11px;
    margin-right: 6px;
    padding-right: 3px;
    border-radius: 2px;
    background: #f96464;
    font-size: 10px;
    font-weight: 700;
}
.vip svg {
    width: 13px;
    height: 15px;
}
.add-friend {
    width: 51px;
    height: 24px;
    border: 1px solid #6a95cc;
    color: #8fb3e6;
}
.card-icons {
    display: flex;
    align-items: center;
    gap: 5px;
    height: 44px;
    padding: 0 4px 0 13px;
    background: rgba(255, 255, 255, 0.62);
}
.pager {
    width: 22px;
    height: 12px;
    margin-left: auto;
}

/* 任务栏 */
.taskbar {
    flex: none;
    display: flex;
    height: 38px;
    background: linear-gradient(to right, #20363f, #21343f 50%, #1c2a3a);
    color: #fff;
}
.start {
    width: 46px;
}
.search {
    display: flex;
    align-items: center;
    gap: 10px;
    width: 306px;
    padding-left: 12px;
    background: #f2f2f2;
    border: 1px solid #b9c3c9;
    border-left: 0;
    color: #333;
}
.search input {
    flex: 1;
    min-width: 0;
    padding: 0;
    border: 0;
    background: none;
    font: inherit;
    font-size: 13px;
}
.search input::placeholder {
    color: #222;
    opacity: 1;
}
.tasks {
    display: flex;
    padding-left: 2px;
}
.task {
    width: 47px;
    padding: 0 4px;
    background: linear-gradient(#76b9ed, #76b9ed) center bottom / 38px 2px no-repeat;
}
.task.active {
    background: linear-gradient(#76b9ed, #76b9ed) center bottom / 46px 2px no-repeat #4a5d6a;
}
.tray {
    display: flex;
    align-items: center;
    gap: 7px;
    margin-left: auto;
    padding-right: 24px;
}
.ime {
    font-size: 15px;
}
.tray time {
    line-height: 17px;
    text-align: center;
}
.notify {
    margin-left: 8px;
}

/* 水印 */
.watermark {
    position: absolute;
    right: 12px;
    bottom: 14px;
    display: flex;
    align-items: flex-end;
    color: #fff;
    opacity: 0.7;
    filter: drop-shadow(0 0 2px #000);
    pointer-events: none;
}
.watermark span {
    margin: 0 -4px 12px 0;
    font-size: 15px;
    line-height: 20px;
}
.watermark svg {
    width: 88px;
    height: 104px;
}
.mark-text {
    font-family: "Liberation Sans Narrow", "DejaVu Sans Condensed", sans-serif;
    font-size: 42px;
    font-weight: 700;
    fill: #fff;
}
```
